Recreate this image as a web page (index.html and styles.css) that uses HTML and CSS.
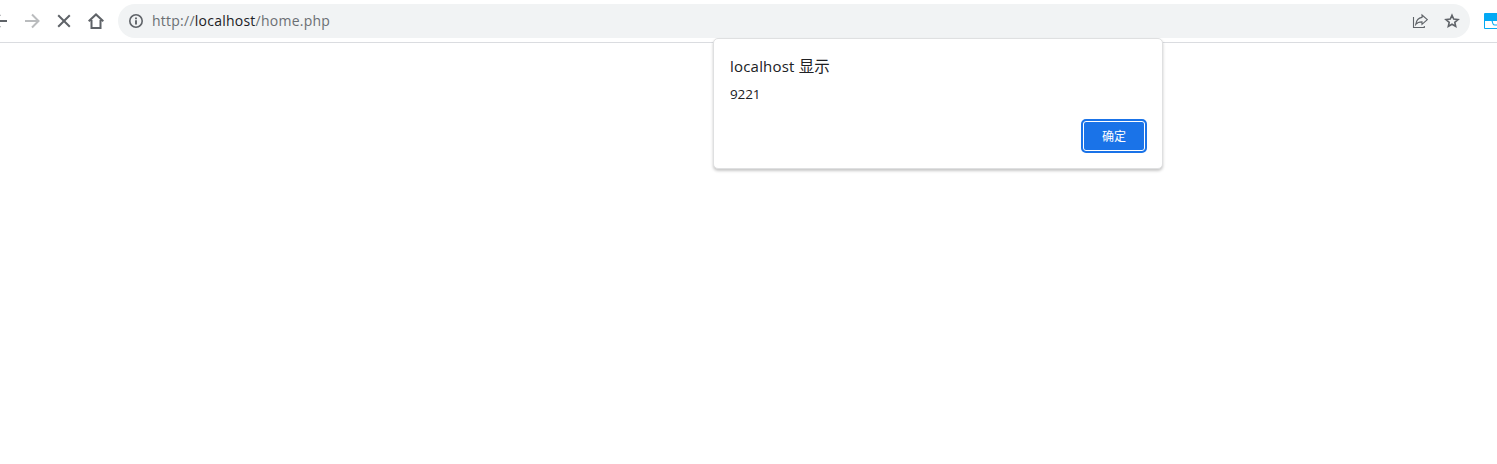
FILE: index.html
```html
<!DOCTYPE html>
<html lang="zh-CN">
<head>
<meta charset="utf-8">
<title>localhost</title>
<link rel="stylesheet" href="styles.css">
</head>
<body>
<header class="toolbar">
  <nav class="nav">
    <svg class="half" viewBox="8 0 8 16"><path d="M15 8H1.800M8 1.500 1.500 8 8 14.500"/></svg>
    <svg class="icon disabled" viewBox="0 0 16 16"><path d="M1 8h13M8 1.500 14.500 8 8 14.500"/></svg>
    <svg class="icon" viewBox="0 0 16 16"><path d="M2.200 2.200l11.600 11.600M13.800 2.200 2.200 13.800"/></svg>
    <svg class="icon" viewBox="0 0 16 16"><path d="M3.500 7v8h9V7M.7 8.300 8 1.400l7.300 6.900"/></svg>
  </nav>
  <div class="address">
    <svg class="icon info" viewBox="0 0 16 16"><circle cx="8" cy="8" r="6.200"/><path class="stem" d="M8 7.300v4.200M8 4.500v1.700"/></svg>
    <span class="url">http://<span class="host">localhost</span>/home.php</span>
    <svg class="icon share" viewBox="0 0 16 16"><path d="M1.500 4v10.500h10.800V13M10 2 15.300 6.700 10 11.300V8.900c-2.700 0-4.700.6-6.300 2.600.6-4 2.600-6.600 6.300-7.100z"/></svg>
    <svg class="icon star" viewBox="0 0 16 16"><path d="M8 2.200l1.700 3.900 4.300.4-3.200 2.800.9 4.200L8 11.300l-3.700 2.200.9-4.200L2 6.500l4.300-.4z"/></svg>
  </div>
  <svg class="extension" viewBox="0 0 13 16"><rect width="18" height="16" rx="1" fill="#03a9f4"/><path d="M1 8h6.500l1 3q.5 1.500 2.500 1.500h2V15H1z" fill="#fff"/><path d="M8.700 8H13v3.500h-2q-1.500 0-1.800-1.500z" fill="#fff"/></svg>
</header>
<main class="page"></main>
<section class="dialog" role="alertdialog">
  <h1 class="title">localhost <span class="cjk">显示</span></h1>
  <p class="message">9221</p>
  <button class="ok">确定</button>
</section>
</body>
</html>
```
FILE: styles.css
```css
* { box-sizing: border-box; }
body { margin: 0; height: 464px; overflow: hidden; background: #fff; font-family: "Open Sans", "Noto Sans CJK SC", sans-serif; }
.toolbar { display: flex; align-items: center; height: 43px; padding: 0 0 1px; border-bottom: 1px solid #dadce0; }
.nav { display: flex; align-items: center; width: 118px; gap: 16px; }
.icon, .half { flex: none; width: 16px; height: 16px; fill: none; stroke: #5f6368; stroke-width: 2; }
.half { width: 8px; }
.disabled { stroke: #babcbe; }
.address { display: flex; align-items: center; width: 1352px; height: 34px; padding: 0 10px; border-radius: 17px; background: #f1f3f4; }
.info { stroke-width: 1.6; }
.stem { stroke-width: 1.9; }
.url { flex: 1; margin-left: 8px; font-size: 14px; line-height: 20px; letter-spacing: .24px; color: #6b6f73; }
.host { color: #202124; }
.share { margin-right: 16px; stroke-width: 1.1; }
.star { stroke-width: 1.6; }
.extension { flex: none; width: 13px; height: 16px; margin-left: 14px; }
.dialog { position: absolute; left: 713px; top: 38px; width: 450px; height: 131px; display: flex; flex-direction: column; padding: 17px 15px 15px 16px; border: 1px solid #dfe0e1; border-radius: 5px; background: #fff; box-shadow: 0 2px 3px rgba(0,0,0,.22); color: #202124; }
.title { margin: 0; font-size: 15px; font-weight: 400; line-height: 20px; letter-spacing: .2px; }
.cjk { font-size: 15.5px; line-height: 1; font-weight: 400; letter-spacing: 0; }
.message { margin: 9px 0 0; font-size: 13.5px; line-height: 19px; letter-spacing: -.1px; }
.ok { align-self: flex-end; width: 66px; height: 34px; margin-top: auto; padding: 0; border: 2px solid #1a73e8; border-radius: 5px; background: #1a73e8; box-shadow: inset 0 0 0 1px #fff; color: #fff; font: 400 12px/30px "Noto Sans CJK SC", sans-serif; }
```
